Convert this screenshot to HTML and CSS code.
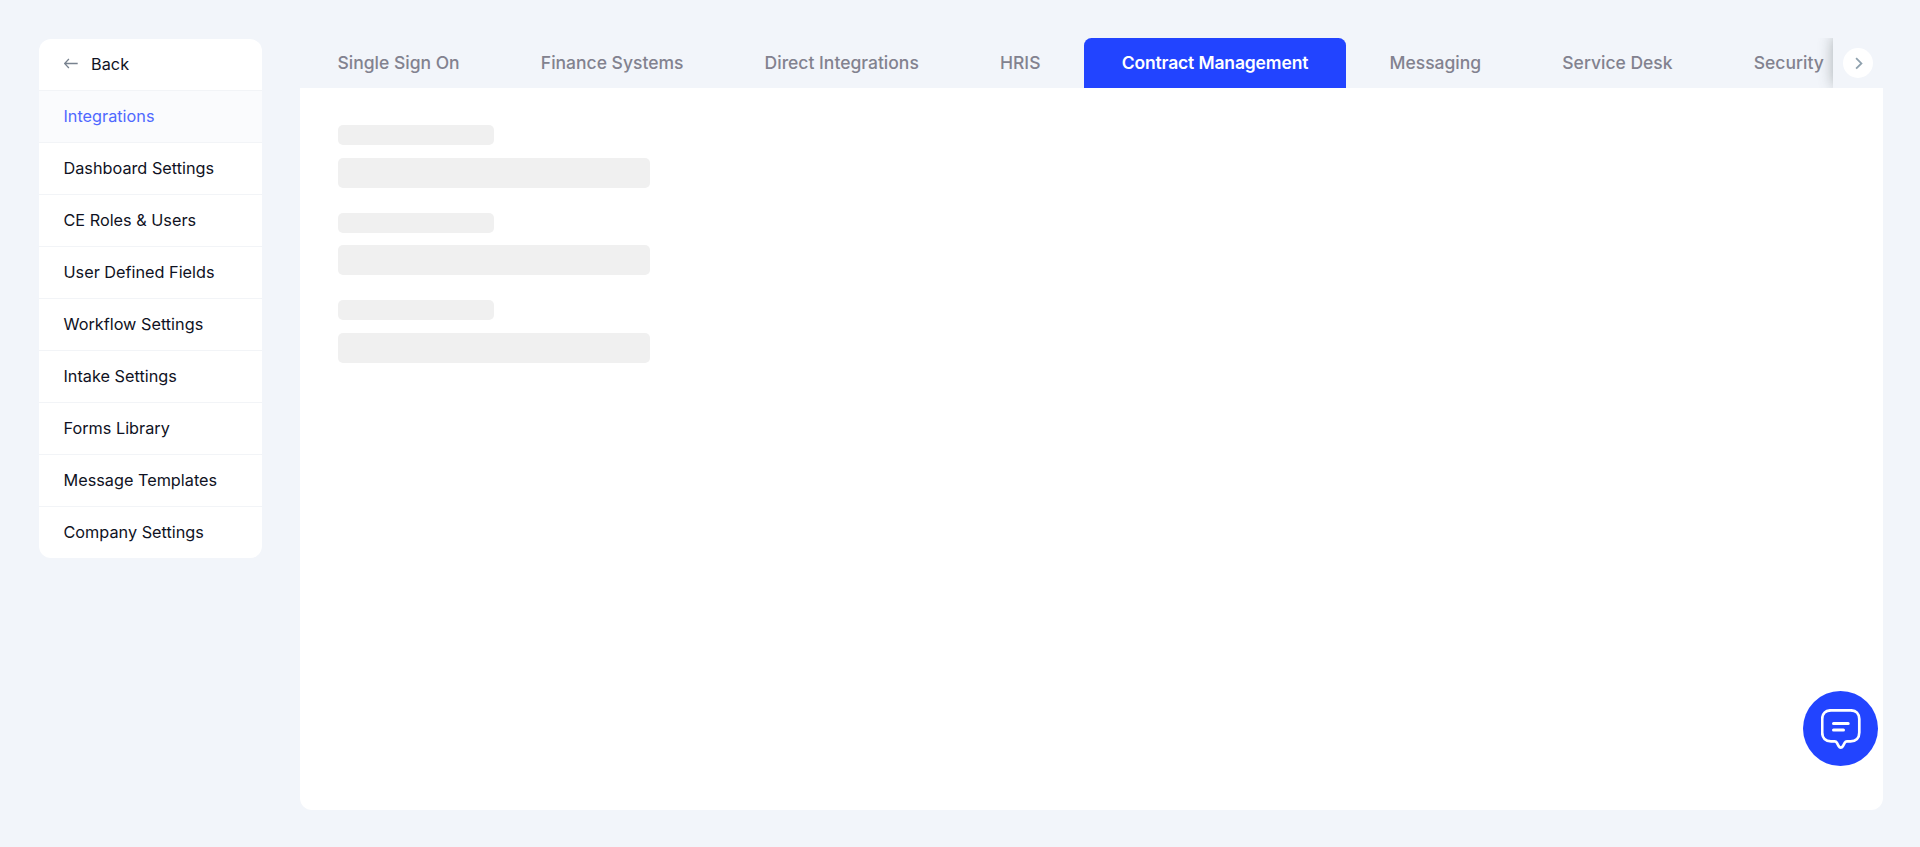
FILE: index.html
```html
<!DOCTYPE html>
<html lang="en">
<head>
<meta charset="utf-8">
<title>Integrations</title>
<link rel="stylesheet" href="styles.css">
</head>
<body>
<div class="page">
  <nav class="sidebar">
    <a class="item back"><svg class="arrow" width="15" height="12" viewBox="0 0 15 12"><path d="M13.700 5.500H.8M4.900 1L.6 5.500l4.300 4.500"/></svg>Back</a>
    <a class="item active">Integrations</a>
    <a class="item">Dashboard Settings</a>
    <a class="item">CE Roles &amp; Users</a>
    <a class="item">User Defined Fields</a>
    <a class="item">Workflow Settings</a>
    <a class="item">Intake Settings</a>
    <a class="item">Forms Library</a>
    <a class="item">Message Templates</a>
    <a class="item">Company Settings</a>
  </nav>
  <main class="main">
    <div class="tabbar">
      <div class="tabs">
        <a class="tab">Single Sign On</a>
        <a class="tab">Finance Systems</a>
        <a class="tab">Direct Integrations</a>
        <a class="tab">HRIS</a>
        <a class="tab selected">Contract Management</a>
        <a class="tab">Messaging</a>
        <a class="tab">Service Desk</a>
        <a class="tab">Security</a>
      </div>
      <div class="scroll">
        <button class="next" aria-label="Next tabs"><svg width="8" height="13" viewBox="0 0 8 13"><path d="M1.100 1.100l5.300 5.300-5.300 5.300"/></svg></button>
      </div>
    </div>
    <section class="panel">
      <div class="field"><div class="bone label"></div><div class="bone input"></div></div>
      <div class="field"><div class="bone label"></div><div class="bone input"></div></div>
      <div class="field"><div class="bone label"></div><div class="bone input"></div></div>
    </section>
  </main>
</div>
<button class="chat" aria-label="Chat"><svg width="40" height="40" viewBox="0 0 40 40"><path d="M10 1.300h19.500c5.500 0 8.800 3.300 8.800 8.800v13.400c0 5.500-3.300 8.800-8.800 8.800h-3.600c-1 0-1.600.4-2.100 1.300l-2 3.700c-1 1.700-3 1.700-4 0l-2-3.700c-.5-.9-1.100-1.300-2.100-1.300H10c-5.500 0-8.800-3.300-8.800-8.800V10.100C1.200 4.600 4.500 1.300 10 1.300Z"/><path class="lines" d="M12.500 14.600h14.700M12.500 21h10"/></svg></button>
</body>
</html>
```
FILE: styles.css
```css
* { box-sizing: border-box; }
body {
  margin: 0;
  height: 847px;
  overflow: hidden;
  background: #f2f5fa;
  font-family: Inter, "Liberation Sans", sans-serif;
}
button { border: 0; padding: 0; }
svg { display: block; fill: none; }
.page {
  display: flex;
  gap: 38px;
  height: 100%;
  padding: 38px 37px 37px 39px;
  align-items: flex-start;
}
.sidebar {
  width: 223px;
  margin-top: 1px;
  border-radius: 12px;
  background: #fff;
  overflow: hidden;
}
.item {
  display: flex;
  align-items: center;
  height: 52px;
  padding: 0 24.500px 2px;
  border-bottom: 1px solid #f2f4f7;
  font-size: 16.250px;
  color: #0f1223;
}
.item:last-child { height: 51px; border-bottom: 0; }
.active { background: #fafbfd; color: #4f68ff; }
.arrow { margin-right: 12.600px; stroke: #78828f; stroke-width: 1.300; }
.main { flex: 1; min-width: 0; height: 772px; display: flex; flex-direction: column; }
.tabbar { display: flex; height: 50px; }
.tabs { display: flex; gap: 6.200px; flex: 1; min-width: 0; overflow: hidden; }
.tab {
  flex: none;
  padding: 0 37.500px;
  line-height: 50px;
  border-radius: 7.500px 7.500px 0 0;
  font-size: 17.500px;
  font-weight: 500;
  color: #82828f;
}
.selected { background: #2244ff; color: #fff; font-weight: 600; letter-spacing: -.14px; }
.scroll {
  display: flex;
  align-items: center;
  justify-content: center;
  width: 50px;
  background: #f2f5fa;
  box-shadow: 0 -2px 14px -1px rgba(70, 80, 80, .48);
  clip-path: inset(0 0 0 -20px);
}
.next {
  display: grid;
  place-items: center;
  width: 30px;
  height: 30px;
  border-radius: 50%;
  background: #fff;
}
.next svg { stroke: #8fa1ae; stroke-width: 1.800; margin-left: 1px; }
.panel {
  flex: 1;
  padding: 37px 38px;
  border-radius: 0 0 12px 12px;
  background: #fff;
}
.field { height: 87.500px; }
.bone { border-radius: 5px; background: #f0f0f0; }
.label { width: 156px; height: 20px; margin-bottom: 12.500px; }
.input { width: 312px; height: 30px; }
.chat {
  position: fixed;
  left: 1803px;
  top: 691px;
  display: grid;
  place-items: center;
  width: 75px;
  height: 75px;
  border-radius: 50%;
  background: #2244ff;
}
.chat svg { stroke: #fff; stroke-width: 2.700; margin: 1px 0 0 1px; }
.chat .lines { stroke-linecap: round; stroke-width: 3; }
```
